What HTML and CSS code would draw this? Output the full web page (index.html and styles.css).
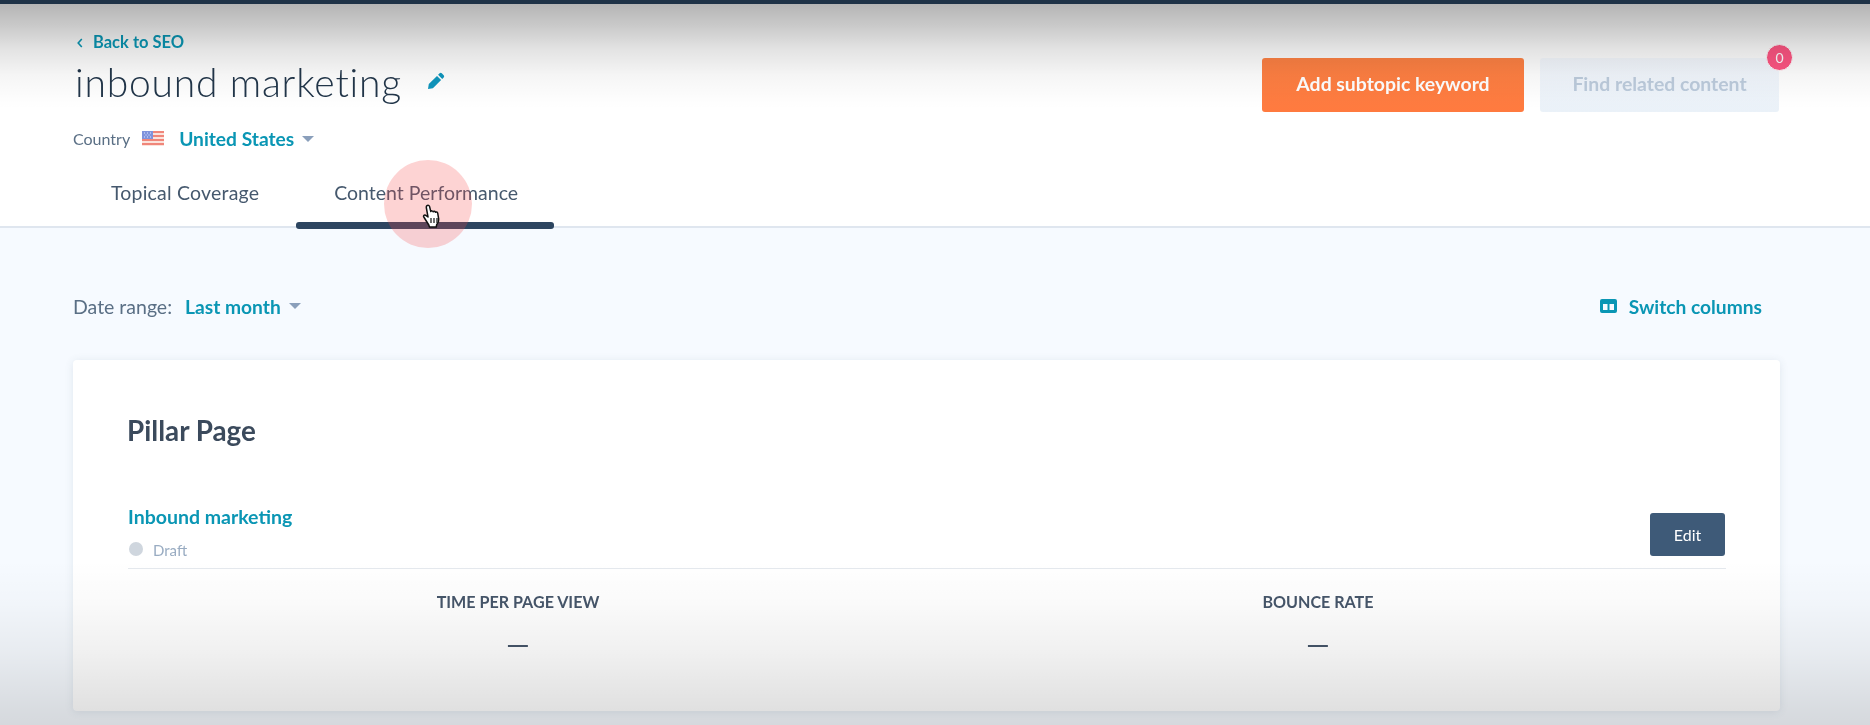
FILE: index.html
```html
<!DOCTYPE html>
<html lang="en">
<head>
<meta charset="utf-8">
<title>inbound marketing</title>
<link rel="stylesheet" href="styles.css">
</head>
<body>
<div class="page">
  <div class="topbar"></div>
  <header class="header">
    <div class="head-top">
      <div class="head-left">
        <a class="back"><svg class="chev" viewBox="0 0 6 10" width="6" height="10"><path d="M4.8 1 1.2 5l3.6 4" fill="none" stroke="currentColor" stroke-width="1.6"/></svg>Back to SEO</a>
        <div class="title-row">
          <h1 class="title">inbound marketing</h1>
          <svg class="pencil" viewBox="0 0 18 18" width="18" height="18"><path d="M12.6 1.3a1.6 1.6 0 0 1 2.2 0l1.9 1.9a1.6 1.6 0 0 1 0 2.2l-1.5 1.5-4.1-4.1zM10 3.900l4.100 4.100-8.200 8.200L1 17l.8-4.900z" fill="currentColor"/></svg>
        </div>
        <div class="country-row">
          <span class="muted">Country</span>
          <svg class="flag" viewBox="0 0 22 15" width="22" height="15"><rect width="22" height="15" fill="#fbe3dc"/><path d="M0 0h22v2H0zM0 4h22v2H0zM0 8h22v2H0zM0 12h22v2H0z" fill="#f0867a"/><rect width="11" height="8" fill="#7f93dc"/><path d="M2 2h1M5 2h1M8 2h1M3.500 4h1M6.500 4h1M2 6h1M5 6h1M8 6h1" stroke="#dfe6ff" stroke-width="1"/></svg>
          <a class="link-strong">United States</a>
          <span class="caret"></span>
        </div>
      </div>
      <div class="actions">
        <button class="btn btn-orange">Add subtopic keyword</button>
        <div class="btn-wrap">
          <button class="btn btn-disabled">Find related content</button>
          <span class="badge">0</span>
        </div>
      </div>
    </div>
    <nav class="tabs">
      <a class="tab tab-first">Topical Coverage</a>
      <a class="tab tab-active">Content Performance</a>
    </nav>
  </header>
  <main class="main">
    <div class="toolbar">
      <div class="date">
        <span class="muted date-label">Date range:</span>
        <a class="link-strong date-link">Last month</a>
        <span class="caret"></span>
      </div>
      <a class="switch">
        <svg viewBox="0 0 17 14" width="17" height="14"><path d="M2 0h13a2 2 0 0 1 2 2v10a2 2 0 0 1-2 2H2a2 2 0 0 1-2-2V2a2 2 0 0 1 2-2zm1 5v6h4.500V5zm6.500 0v6H14V5z" fill="currentColor" fill-rule="evenodd"/></svg>
        Switch columns
      </a>
    </div>
    <section class="card">
      <h2 class="card-title">Pillar Page</h2>
      <div class="page-row">
        <div>
          <a class="page-link">Inbound marketing</a>
          <div class="status"><span class="dot"></span>Draft</div>
        </div>
        <button class="btn-edit">Edit</button>
      </div>
      <div class="stats">
        <div class="stat">
          <div class="stat-label">TIME PER PAGE VIEW</div>
          <div class="stat-value">—</div>
        </div>
        <div class="stat">
          <div class="stat-label">BOUNCE RATE</div>
          <div class="stat-value">—</div>
        </div>
      </div>
    </section>
  </main>
  <div class="click-ring"></div>
  <svg class="cursor" viewBox="0 0 20 24" width="20" height="24"><path d="M5 1.600c1-.8 2.300-.2 2.600 1l1.200 5c.3-1 2-1 2.400.2.500-.8 2-.7 2.300.4.700-.6 2-.2 2.200.9l1 6c.2 2-.5 4-2 5.500l-.5 2.400H7.500l-.7-2L1.800 13c-.8-1 .3-2.400 1.600-1.800l2.600 1.800L4.300 3.500c-.1-.8.200-1.500.7-1.900z" fill="#fff" stroke="#111" stroke-width="1.500" stroke-linejoin="round"/><path d="M9 14v5M12 14v5M15 14v5" stroke="#111" stroke-width="1.200"/></svg>
  <div class="fade-top"></div>
  <div class="fade-bottom"></div>
</div>
</body>
</html>
```
FILE: styles.css
```css
* { box-sizing: border-box; }
html, body { margin: 0; padding: 0; }
body { font-family: Lato, "Open Sans", sans-serif; color: #33475b; background: #f6faff; }
.page { position: relative; width: 1870px; height: 725px; overflow: hidden; background: #f6faff; filter: blur(0.45px); }
.topbar { height: 4px; background: #1f3347; }
.header { background: #fff; border-bottom: 2px solid #dfe6ef; padding: 28px 90px 0 73px; }
.head-top { display: flex; justify-content: space-between; align-items: flex-start; }
.back { display: flex; align-items: center; gap: 10px; padding-left: 4px; color: #0a9ab8; font-size: 16.500px; font-weight: 700; line-height: 21px; }
.chev { flex: none; }
.title-row { display: flex; align-items: center; gap: 25px; margin-top: 6px; padding-left: 2px; }
.title { margin: 0; font-size: 39px; font-weight: 300; line-height: 46px; letter-spacing: 0.8px; color: #22364a; }
.pencil { color: #0f96bd; margin-top: -3px; }
.country-row { display: flex; align-items: center; margin-top: 23px; line-height: 22px; }
.muted { color: #5a6f85; font-size: 16px; }
.flag { margin: -2px 15px 0 12px; }
.link-strong { color: #0a96b4; font-size: 19.200px; font-weight: 700; }
.caret { width: 0; height: 0; margin-left: 8px; border: 6px solid transparent; border-top: 6px solid #8a9fbb; border-bottom: 0; }
.actions { display: flex; gap: 16px; margin-top: 26px; margin-right: 1px; }
.btn-wrap { position: relative; }
.btn { display: block; height: 54px; padding-bottom: 5px; border: 0; border-radius: 3px; font: 700 19.400px Lato, sans-serif; }
.btn-orange { width: 262px; background: linear-gradient(#ff8244, #ff7a3f); color: #fff; }
.btn-disabled { width: 239px; background: linear-gradient(#f5f9ff, #eaf1f8); color: #bccbdc; }
.badge { position: absolute; top: -14px; right: -14px; width: 27px; height: 27px; border-radius: 50%; background: #ff5683; border: 1px solid #fff; color: #fff; font-size: 14px; line-height: 25px; text-align: center; }
.tabs { display: flex; gap: 5px; margin-top: 32px; margin-bottom: -3px; }
.tab { position: relative; padding: 0 36px 25px 38px; font-size: 19.500px; line-height: 22px; color: #46596e; }
.tab-first { padding-right: 33px; letter-spacing: 0.2px; }
.tab-active { margin-left: -1px; }
.tab-active::after { content: ""; position: absolute; left: 0; right: 0; bottom: 0; height: 7px; border-radius: 3px; background: #2d4560; }
.main { padding: 0 90px 0 73px; }
.toolbar { display: flex; justify-content: space-between; align-items: center; height: 24px; margin-top: 66px; margin-bottom: 42px; padding-right: 18px; }
.date { display: flex; align-items: center; }
.date-label { font-size: 19.500px; margin-right: 13px; }
.date-link { font-size: 19.200px; }
.switch { display: flex; align-items: center; gap: 12px; color: #0a96b4; font-size: 19.200px; font-weight: 700; }
.card { height: 351px; background: #fff; border-radius: 4px; box-shadow: 0 1px 8px rgba(66, 91, 118, 0.12); padding: 55px 54px 0 54px; }
.card-title { margin: 0 0 59px; font-size: 27.800px; font-weight: 700; line-height: 32px; color: #3b4a5c; }
.page-row { display: flex; justify-content: space-between; align-items: flex-end; margin-left: 1px; padding-bottom: 8px; border-bottom: 1px solid #e5e9ee; }
.page-link { display: block; color: #0a96b4; font-size: 19.500px; font-weight: 700; line-height: 22px; }
.status { display: flex; align-items: center; gap: 10px; margin-top: 12px; padding-left: 1px; color: #99acc2; font-size: 15px; line-height: 20px; }
.dot { width: 14px; height: 14px; border-radius: 50%; background: #cfd6de; margin-top: -3px; }
.btn-edit { width: 75px; height: 43px; margin: 0 1px 4px 0; background: #3e5a78; color: #fff; border: 0; border-radius: 3px; font: 400 16px Lato, sans-serif; }
.stats { display: grid; grid-template-columns: 800px 800px; margin: 23px 0 0 -9px; }
.stat { text-align: center; }
.stat-label { font-size: 16.100px; font-weight: 700; line-height: 20px; color: #46566a; }
.stat-value { margin-top: 19px; font-size: 30px; line-height: 24px; color: #46566a; }
.click-ring { position: absolute; left: 384px; top: 160px; width: 88px; height: 88px; border-radius: 50%; background: rgba(245, 70, 70, 0.24); }
.cursor { position: absolute; left: 422px; top: 204px; }
.fade-top { position: absolute; left: 0; right: 0; top: 4px; height: 106px; background: linear-gradient(rgba(0, 0, 0, 0.29), rgba(0, 0, 0, 0.21) 20%, rgba(0, 0, 0, 0.11) 43%, rgba(0, 0, 0, 0.04) 67%, rgba(0, 0, 0, 0.008) 90%, rgba(0, 0, 0, 0)); }
.fade-bottom { position: absolute; left: 0; right: 0; bottom: 0; height: 165px; background: linear-gradient(rgba(0, 0, 0, 0), rgba(0, 0, 0, 0.02) 26%, rgba(0, 0, 0, 0.06) 56%, rgba(0, 0, 0, 0.12) 91%, rgba(0, 0, 0, 0.135)); }
```
